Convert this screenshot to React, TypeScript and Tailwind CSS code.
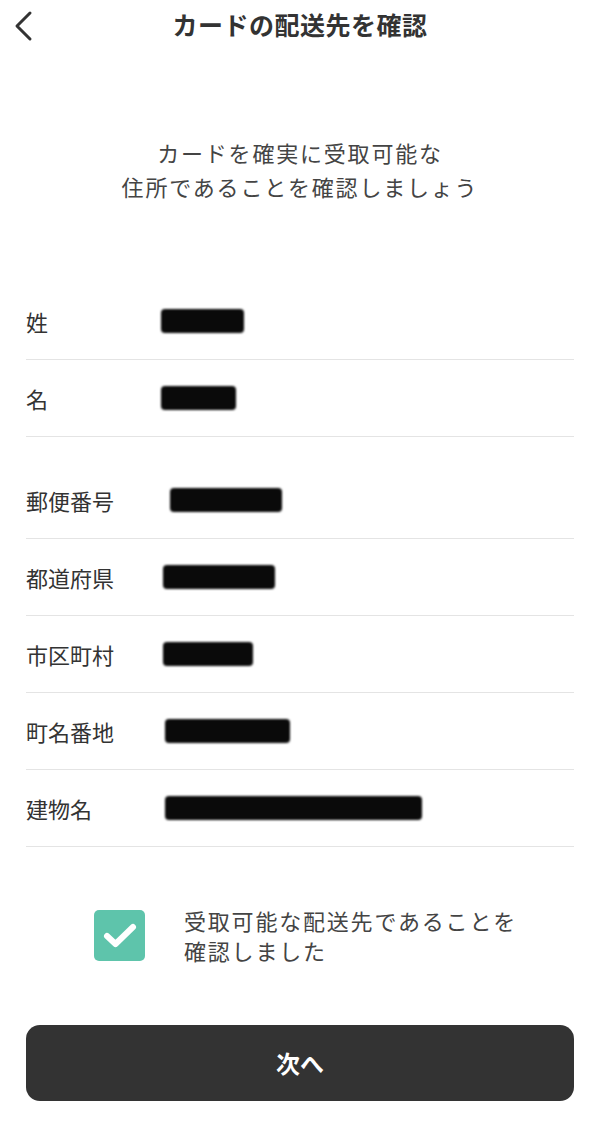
import React from 'react';

interface Field {
  label: string;
  blur: string;
}

const nameFields: Field[] = [
  { label: '姓', blur: 'ml-[113px] w-[83px]' },
  { label: '名', blur: 'ml-[113px] w-[75px]' },
];

const addressFields: Field[] = [
  { label: '郵便番号', blur: 'ml-[56px] w-[112px]' },
  { label: '都道府県', blur: 'ml-[49px] w-[112px]' },
  { label: '市区町村', blur: 'ml-[49px] w-[90px]' },
  { label: '町名番地', blur: 'ml-[51px] w-[125px]' },
  { label: '建物名', blur: 'ml-[73px] w-[257px]' },
];

const Row: React.FC<{ field: Field; tall?: boolean }> = ({ field, tall }) => (
  <div
    className={`flex items-center border-b border-[#e4e4e4] ${tall ? 'h-[102px] pt-[25px]' : 'h-[77px]'}`}
  >
    <span className="text-[22px] text-[#333] leading-none">{field.label}</span>
    <div className={`h-[24px] rounded-[4px] bg-[#0a0a0a] blur-[1px] ${field.blur}`} />
  </div>
);

export default function App() {
  return (
    <div
      className="w-[600px] h-[1147px] bg-white flex flex-col"
      style={{ fontFamily: '"Noto Sans CJK JP", "Noto Sans", sans-serif' }}
    >
      {/* header */}
      <div className="relative h-[54px] flex items-center justify-center">
        <button className="absolute left-[12px] top-[10px] p-0">
          <svg width="24" height="32" viewBox="0 0 24 32" fill="none">
            <path d="M18 3 L5 16 L18 29" stroke="#333" strokeWidth="3" strokeLinecap="round" strokeLinejoin="round" />
          </svg>
        </button>
        <h1 className="text-[25px] font-bold text-[#333] tracking-[0.5px] -mt-[4px]">カードの配送先を確認</h1>
      </div>

      <p className="mt-[81px] text-center text-[22px] leading-[34px] text-[#444] tracking-[1.8px]">
        カードを確実に受取可能な
        <br />
        住所であることを確認しましょう
      </p>

      <div className="mt-[80px] mx-[26px]">
        {nameFields.map((f) => (
          <Row key={f.label} field={f} />
        ))}
        {addressFields.map((f, i) => (
          <Row key={f.label} field={f} tall={i === 0} />
        ))}
      </div>

      <div className="mt-[58px] flex items-center pl-[94px]">
        <div className="w-[51px] h-[51px] rounded-[5px] bg-[#5ec4ab] flex items-center justify-center shrink-0">
          <svg width="40" height="40" viewBox="0 0 40 40" fill="none">
            <path d="M7 21 L15.5 29 L33 12" stroke="white" strokeWidth="6" strokeLinecap="round" strokeLinejoin="round" />
          </svg>
        </div>
        <p className="ml-[39px] text-[22px] leading-[30px] text-[#444] tracking-[1.8px]">
          受取可能な配送先であることを
          <br />
          確認しました
        </p>
      </div>

      <div className="mx-[26px] mt-[60px]">
        <button className="w-full h-[76px] rounded-[14px] bg-[#333] text-white text-[24px] font-bold">
          次へ
        </button>
      </div>
    </div>
  );
}
